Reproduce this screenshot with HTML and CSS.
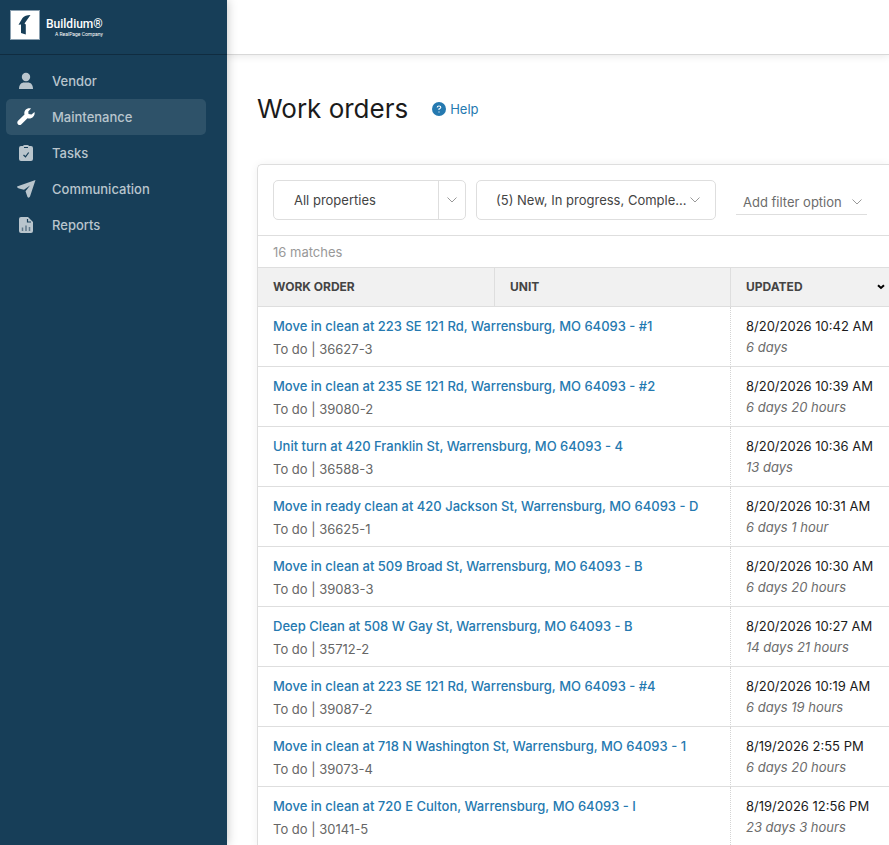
FILE: index.html
```html
<!DOCTYPE html>
<html lang="en">

<head>
  <meta charset="UTF-8" />
  <meta name="viewport" content="width=device-width, initial-scale=1.0" />
  <title>Work orders</title>
  <link rel="stylesheet" href="styles.css">
</head>

<body>
  <div class="app">
    <aside class="sidebar">
      <div class="brand">
        <svg class="brand-mark" viewBox="0 0 30 30" width="30" height="30" aria-hidden="true">
          <rect width="30" height="30" fill="#8ba0b0" />
          <rect x="1" y="1" width="28" height="28" fill="#fff" />
          <path d="M20.500 5 C17 5 14 6 12.500 8 L8.500 14.800 L11 14.500 V23 L15.800 24.500 V14.500 L14.500 13.500 Z" fill="#173e58" />
        </svg>
        <div class="brand-text">
          <span class="brand-name">Buildium®</span>
          <span class="brand-tag">A RealPage Company</span>
        </div>
      </div>
      <nav class="nav">
        <a class="nav-item" href="#">
          <svg viewBox="0 0 20 20" width="20" height="20" fill="currentColor" aria-hidden="true">
            <circle cx="10" cy="6" r="4.200" />
            <path d="M3 18 C3 13.500 5.500 11.500 8 11.500 H12 C14.500 11.500 17 13.500 17 18 Z" />
          </svg>
          Vendor
        </a>
        <a class="nav-item active" href="#">
          <svg viewBox="0 0 20 20" width="20" height="20" fill="currentColor" aria-hidden="true">
            <path d="M18.500 5 L15.500 7.500 L12.500 7 L12.300 4.500 L15 1.500 C11 .5 7.500 3.500 8.500 7.500 L1.800 14 C.2 16 2.800 19.500 5.200 17.500 L11.500 11.300 C15.500 12.500 19.500 9 18.500 5 Z" />
          </svg>
          Maintenance
        </a>
        <a class="nav-item" href="#">
          <svg viewBox="0 0 20 20" width="20" height="20" aria-hidden="true">
            <path d="M5 3 H7 Q7.500 2 8.500 2 H11.500 Q12.500 2 13 3 H15 Q17 3 17 5 V16 Q17 18 15 18 H5 Q3 18 3 16 V5 Q3 3 5 3 Z" fill="currentColor" />
            <path d="M8 4.500 H12 M7.500 12 L9.500 13.800 L12.700 9.500" fill="none" stroke="#173e58" stroke-width="1.200" />
          </svg>
          Tasks
        </a>
        <a class="nav-item" href="#">
          <svg viewBox="0 0 20 20" width="20" height="20" fill="currentColor" aria-hidden="true">
            <path d="M19.500 1 L1 7.500 Q1 9 3 9.500 L8 10.800 L14 6.500 L9.500 12.200 L11.500 18 Q13 19.500 14 17.500 Z" />
          </svg>
          Communication
        </a>
        <a class="nav-item" href="#">
          <svg viewBox="0 0 20 20" width="20" height="20" aria-hidden="true">
            <path d="M5 2 H12 L17 7 V16 Q17 18 15 18 H5 Q3 18 3 16 V4 Q3 2 5 2 Z" fill="currentColor" />
            <path d="M11.500 4 V7 H15" fill="none" stroke="#173e58" stroke-width="1.200" />
            <path d="M6.500 12.500 V16 M10 10.500 V16 M13.500 12 V16" fill="none" stroke="#5f788a" stroke-width="1.500" />
          </svg>
          Reports
        </a>
      </nav>
    </aside>

    <div class="content">
      <header class="topbar"></header>
      <main class="page">
        <div class="page-head">
          <h1>Work orders</h1>
          <a class="help" href="#">
            <svg viewBox="0 0 14 14" width="14" height="14" aria-hidden="true">
              <circle cx="7" cy="7" r="7" fill="#2579b0" />
              <path d="M5.200 5.500 Q5.200 4 7 4 Q8.800 4 8.800 5.500 Q8.800 6.300 7 7 V8 M7 9.500 V10.600" fill="none" stroke="#fff" stroke-width="1.100" />
            </svg>
            Help
          </a>
        </div>

        <section class="panel">
          <div class="filters">
            <div class="select-box">
              <select class="select" aria-label="Properties">
                <option>All properties</option>
              </select>
              <span class="select-arrow">
                <svg class="chevron" viewBox="0 0 10 6" width="10" height="6" aria-hidden="true"><path d="M.5 .5 L5 5 L9.500 .5" /></svg>
              </span>
            </div>
            <button class="status-filter" type="button">
              <span class="status-text">(5) New, In progress, Comple...</span>
              <svg class="chevron" viewBox="0 0 10 6" width="10" height="6" aria-hidden="true"><path d="M.5 .5 L5 5 L9.500 .5" /></svg>
            </button>
            <button class="add-filter" type="button">
              Add filter option
              <svg class="chevron" viewBox="0 0 10 6" width="10" height="6" aria-hidden="true"><path d="M.5 .5 L5 5 L9.500 .5" /></svg>
            </button>
          </div>
          <div class="matches">16 matches</div>
          <table class="orders">
            <colgroup>
              <col class="col-order">
              <col class="col-unit">
              <col>
            </colgroup>
            <thead>
              <tr>
                <th>Work order</th>
                <th>Unit</th>
                <th>
                  <div class="sorted">
                    Updated
                    <svg viewBox="0 0 8 6" width="8" height="6" aria-hidden="true"><path d="M1 1.200 L4 4 L7 1.200" fill="none" stroke="#000" stroke-width="2" /></svg>
                  </div>
                </th>
              </tr>
            </thead>
            <tbody>
              <tr>
                <td colspan="2"><a href="#">Move in clean at 223 SE 121 Rd, Warrensburg, MO 64093 - #1</a><p class="status">To do | 36627-3</p></td>
                <td>8/20/2026 10:42 AM<p class="age">6 days</p></td>
              </tr>
              <tr>
                <td colspan="2"><a href="#">Move in clean at 235 SE 121 Rd, Warrensburg, MO 64093 - #2</a><p class="status">To do | 39080-2</p></td>
                <td>8/20/2026 10:39 AM<p class="age">6 days 20 hours</p></td>
              </tr>
              <tr>
                <td colspan="2"><a href="#">Unit turn at 420 Franklin St, Warrensburg, MO 64093 - 4</a><p class="status">To do | 36588-3</p></td>
                <td>8/20/2026 10:36 AM<p class="age">13 days</p></td>
              </tr>
              <tr>
                <td colspan="2"><a href="#">Move in ready clean at 420 Jackson St, Warrensburg, MO 64093 - D</a><p class="status">To do | 36625-1</p></td>
                <td>8/20/2026 10:31 AM<p class="age">6 days 1 hour</p></td>
              </tr>
              <tr>
                <td colspan="2"><a href="#">Move in clean at 509 Broad St, Warrensburg, MO 64093 - B</a><p class="status">To do | 39083-3</p></td>
                <td>8/20/2026 10:30 AM<p class="age">6 days 20 hours</p></td>
              </tr>
              <tr>
                <td colspan="2"><a href="#">Deep Clean at 508 W Gay St, Warrensburg, MO 64093 - B</a><p class="status">To do | 35712-2</p></td>
                <td>8/20/2026 10:27 AM<p class="age">14 days 21 hours</p></td>
              </tr>
              <tr>
                <td colspan="2"><a href="#">Move in clean at 223 SE 121 Rd, Warrensburg, MO 64093 - #4</a><p class="status">To do | 39087-2</p></td>
                <td>8/20/2026 10:19 AM<p class="age">6 days 19 hours</p></td>
              </tr>
              <tr>
                <td colspan="2"><a href="#">Move in clean at 718 N Washington St, Warrensburg, MO 64093 - 1</a><p class="status">To do | 39073-4</p></td>
                <td>8/19/2026 2:55 PM<p class="age">6 days 20 hours</p></td>
              </tr>
              <tr>
                <td colspan="2"><a href="#">Move in clean at 720 E Culton, Warrensburg, MO 64093 - I</a><p class="status">To do | 30141-5</p></td>
                <td>8/19/2026 12:56 PM<p class="age">23 days 3 hours</p></td>
              </tr>
            </tbody>
          </table>
        </section>
      </main>
    </div>
  </div>
</body>

</html>
```
FILE: styles.css
```css
* {
  box-sizing: border-box;
}

body {
  margin: 0;
  font-family: Inter, "Open Sans", sans-serif;
  font-size: 13px;
  line-height: 20px;
  color: #1b1b1b;
  background: #fff;
}

a {
  color: #2579b0;
  text-decoration: none;
}

.app {
  display: flex;
  height: 100vh;
  overflow: hidden;
}

/* sidebar */
.sidebar {
  flex: 0 0 227px;
  background: #173e58;
  box-shadow: 0 0 10px rgba(0, 0, 0, 0.25);
  z-index: 1;
}

.brand {
  display: flex;
  gap: 6px;
  height: 55px;
  padding: 10px;
  border-bottom: 1px solid #102c40;
  color: #fff;
}

.brand-text {
  display: flex;
  flex-direction: column;
  padding-top: 7px;
  font-family: Roboto, sans-serif;
}

.brand-name {
  font-size: 12px;
  font-weight: 500;
  line-height: 14px;
}

.brand-tag {
  padding-left: 9px;
  font-size: 5px;
  line-height: 6px;
}

.nav {
  padding: 8px 21px 0 6px;
}

.nav-item {
  display: flex;
  align-items: center;
  gap: 16px;
  height: 36px;
  padding: 0 10px;
  border-radius: 5px;
  color: #b9c5cd;
  font-weight: 500;
}

.nav-item.active {
  background: #2e5269;
}

.nav-item.active svg {
  color: #fff;
}

/* content */
.content {
  flex: 1;
  min-width: 0;
}

.topbar {
  height: 55px;
  border-bottom: 1px solid #d8d8d8;
  box-shadow: 0 1px 8px rgba(0, 0, 0, 0.1);
}

.page {
  padding: 34px 0 0 30px;
}

.page-head {
  display: flex;
  align-items: center;
  gap: 24px;
  height: 40px;
  margin-bottom: 35px;
}

h1 {
  margin: 0;
  font-size: 26px;
  font-weight: 400;
  line-height: 40px;
}

.help {
  display: flex;
  align-items: center;
  gap: 4px;
}

.panel {
  border: 1px solid #dedede;
  border-right: 0;
  border-radius: 5px 0 0 0;
  box-shadow: 0 0 8px rgba(0, 0, 0, 0.06);
}

.filters {
  display: flex;
  gap: 10px;
  padding: 15px;
  border-bottom: 1px solid #dedede;
}

.select-box,
.status-filter {
  display: flex;
  align-items: center;
  height: 40px;
  border: 1px solid #dedede;
  border-radius: 5px;
  background: #fff;
}

.select-box {
  flex: 0 0 193px;
}

.select {
  flex: 1;
  min-width: 0;
  height: 38px;
  padding: 0 20px;
  border: 0;
  appearance: none;
  background: none;
  font: inherit;
  color: #444;
}

.select-arrow {
  display: flex;
  align-items: center;
  justify-content: center;
  width: 27px;
  height: 38px;
  border-left: 1px solid #dedede;
}

.chevron {
  flex: none;
  fill: none;
  stroke: #999;
}

.status-filter {
  flex: 0 0 240px;
  justify-content: space-between;
  padding: 0 15px 0 19px;
  font: inherit;
  color: #444;
}

.status-text {
  white-space: nowrap;
}

.add-filter {
  display: flex;
  align-items: center;
  align-self: flex-end;
  gap: 10px;
  height: 26px;
  margin: 0 0 5px 10px;
  padding: 0 5px 0 7px;
  border: 0;
  border-bottom: 1px solid #dedede;
  background: none;
  font: inherit;
  color: #6c6c6c;
  white-space: nowrap;
}

.matches {
  height: 31px;
  padding: 6px 15px 0;
  color: #999;
}

.orders {
  width: 100%;
  table-layout: fixed;
  border-collapse: separate;
  border-spacing: 0;
}

.col-order {
  width: 237px;
}

.col-unit {
  width: 236px;
}

.orders th {
  height: 40px;
  padding: 0 4px 0 15px;
  border: solid #dedede;
  border-width: 1px 1px 1px 0;
  background: #f1f1f1;
  color: #444;
  font-size: 12px;
  font-weight: 700;
  text-align: left;
  text-transform: uppercase;
}

.orders th:last-child,
.orders td:last-child {
  border-right: 0;
}

.sorted {
  display: flex;
  align-items: center;
  justify-content: space-between;
}

.orders td {
  height: 60px;
  padding: 9px 0 0 15px;
  border-bottom: 1px solid #dedede;
  border-right: 1px dotted #d4d4d4;
  vertical-align: top;
  white-space: nowrap;
}

.orders td a {
  font-weight: 500;
}

.orders p {
  margin: 0;
}

.status {
  padding-top: 3px;
  color: #666;
}

.age {
  padding-top: 1px;
  color: #6c6c6c;
  font-style: italic;
}
```
